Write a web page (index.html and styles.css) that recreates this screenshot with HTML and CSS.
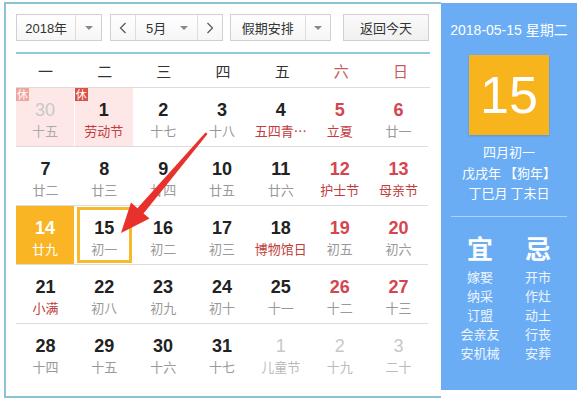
FILE: index.html
```html
<!DOCTYPE html>
<html lang="zh-CN">
<head>
<meta charset="utf-8">
<link rel="stylesheet" href="styles.css">
</head>
<body>
<div class="cal">
  <div class="main">
    <div class="toolbar">
      <div class="sel sel-year"><span class="sel-text">2018年</span><span class="sel-arrow"><i class="tri"></i></span></div>
      <div class="month-group">
        <span class="nav">
          <svg width="8" height="12" viewBox="0 0 8 12"><path d="M6.5 1 L1.5 6 L6.5 11" fill="none" stroke="#555" stroke-width="1.2"/></svg>
        </span>
        <span class="month"><span class="month-text">5月</span><i class="tri"></i></span>
        <span class="nav nav-next">
          <svg width="8" height="12" viewBox="0 0 8 12"><path d="M1.5 1 L6.5 6 L1.5 11" fill="none" stroke="#555" stroke-width="1.2"/></svg>
        </span>
      </div>
      <div class="sel sel-holiday"><span class="sel-text">假期安排</span><span class="sel-arrow"><i class="tri"></i></span></div>
      <div class="btn-today">返回今天</div>
    </div>
    <div class="weekdays">
      <span>一</span><span>二</span><span>三</span><span>四</span><span>五</span><span class="we">六</span><span class="we">日</span>
    </div>
    <div class="grid">
      <div class="row">
        <div class="cell rest other"><span class="badge light">休</span><b>30</b><small>十五</small></div>
        <div class="cell rest"><span class="badge">休</span><b>1</b><small class="fest">劳动节</small></div>
        <div class="cell"><b>2</b><small>十七</small></div>
        <div class="cell"><b>3</b><small>十八</small></div>
        <div class="cell"><b>4</b><small class="fest">五四青…</small></div>
        <div class="cell wkend"><b>5</b><small class="fest">立夏</small></div>
        <div class="cell wkend"><b>6</b><small>廿一</small></div>
      </div>
      <div class="row">
        <div class="cell"><b>7</b><small>廿二</small></div>
        <div class="cell"><b>8</b><small>廿三</small></div>
        <div class="cell"><b>9</b><small>廿四</small></div>
        <div class="cell"><b>10</b><small>廿五</small></div>
        <div class="cell"><b>11</b><small>廿六</small></div>
        <div class="cell wkend"><b>12</b><small class="fest">护士节</small></div>
        <div class="cell wkend"><b>13</b><small class="fest">母亲节</small></div>
      </div>
      <div class="row">
        <div class="cell selected"><b>14</b><small>廿九</small></div>
        <div class="cell today"><span class="frame"></span><b>15</b><small>初一</small></div>
        <div class="cell"><b>16</b><small>初二</small></div>
        <div class="cell"><b>17</b><small>初三</small></div>
        <div class="cell"><b>18</b><small class="fest">博物馆日</small></div>
        <div class="cell wkend"><b>19</b><small>初五</small></div>
        <div class="cell wkend"><b>20</b><small>初六</small></div>
      </div>
      <div class="row">
        <div class="cell"><b>21</b><small class="fest">小满</small></div>
        <div class="cell"><b>22</b><small>初八</small></div>
        <div class="cell"><b>23</b><small>初九</small></div>
        <div class="cell"><b>24</b><small>初十</small></div>
        <div class="cell"><b>25</b><small>十一</small></div>
        <div class="cell wkend"><b>26</b><small>十二</small></div>
        <div class="cell wkend"><b>27</b><small>十三</small></div>
      </div>
      <div class="row">
        <div class="cell"><b>28</b><small>十四</small></div>
        <div class="cell"><b>29</b><small>十五</small></div>
        <div class="cell"><b>30</b><small>十六</small></div>
        <div class="cell"><b>31</b><small>十七</small></div>
        <div class="cell other"><b>1</b><small>儿童节</small></div>
        <div class="cell other"><b>2</b><small>十九</small></div>
        <div class="cell other"><b>3</b><small>二十</small></div>
      </div>
    </div>
  </div>
  <div class="side">
    <div class="side-date">2018-05-15 星期二</div>
    <div class="side-day">15</div>
    <div class="side-lunar">
      <div>四月初一</div>
      <div>戊戌年 【狗年】</div>
      <div>丁巳月 丁未日</div>
    </div>
    <div class="side-sep"></div>
    <div class="yiji">
      <div class="col">
        <div class="big">宜</div>
        <div>嫁娶</div><div>纳采</div><div>订盟</div><div>会亲友</div><div>安机械</div>
      </div>
      <div class="col">
        <div class="big">忌</div>
        <div>开市</div><div>作灶</div><div>动土</div><div>行丧</div><div>安葬</div>
      </div>
    </div>
  </div>
  <svg class="arrow" width="582" height="400" viewBox="0 0 582 400">
    <polygon points="206.5,133 207.5,134 143.5,213.5 149.5,218.5 121,233 131,202.5 137.4,208.3 205.5,132.5" fill="#e8312c"/>
  </svg>
</div>
</body>
</html>
```
FILE: styles.css
```css
* { box-sizing: border-box; }
html, body { margin: 0; padding: 0; background: #fff; }
body {
  font-family: "Liberation Sans", "Noto Sans CJK SC", sans-serif;
  color: #333;
}
.cal {
  position: relative;
  display: flex;
  align-items: flex-start;
  width: 582px;
  height: 400px;
  padding: 2px 0 0 4px;
}
.main {
  width: 437px;
  height: 396px;
  border: 2px solid #8dc2d6;
  border-right: none;
  padding: 10px 11px 0 10px;
}
.toolbar {
  display: flex;
  align-items: center;
  height: 27px;
  font-size: 13px;
  color: #333;
}
.sel, .month-group, .btn-today {
  display: flex;
  height: 27px;
  border: 1px solid #d0d0d0;
  background: linear-gradient(#fff, #f6f6f6);
}
.sel-text {
  display: flex;
  align-items: center;
  justify-content: center;
  border-right: 1px solid #ddd;
}
.sel-arrow {
  width: 25px;
  display: flex;
  align-items: center;
  justify-content: center;
}
.tri {
  display: block;
  width: 0; height: 0;
  border-left: 4px solid transparent;
  border-right: 4px solid transparent;
  border-top: 4px solid #888;
}
.sel-year { width: 86px; }
.sel-year .sel-text { width: 60px; }
.month-group { margin-left: 8px; width: 113px; }
.nav {
  width: 25px;
  display: flex;
  align-items: center;
  justify-content: center;
  border-right: 1px solid #ddd;
}
.nav-next { border-right: none; border-left: 1px solid #ddd; }
.month {
  flex: 1;
  display: flex;
  align-items: center;
  padding: 0 9px 0 10px;
}
.month-text { flex: 1; }
.sel-holiday { margin-left: 7px; width: 101px; }
.sel-holiday .sel-text { width: 76px; }
.btn-today {
  margin-left: 12px;
  width: 86px;
  align-items: center;
  justify-content: center;
  background: linear-gradient(#fafafa, #f0f0f0);
}
.weekdays {
  margin-top: 11px;
  border-top: 2px solid #8fc8da;
  border-bottom: 1px solid #dcdcdc;
  height: 36px;
  display: grid;
  grid-template-columns: repeat(7, 1fr);
  align-items: center;
  text-align: center;
  font-size: 15px;
  color: #333;
  font-family: "Noto Sans CJK SC", sans-serif;
}
.weekdays .we { color: #c9585c; }
.grid { width: 412px; }
.row {
  display: grid;
  grid-template-columns: repeat(7, 1fr);
  height: 59px;
  border-bottom: 1px solid #dcdcdc;
}
.row:last-child { border-bottom: none; }
.cell {
  position: relative;
  display: flex;
  flex-direction: column;
  align-items: center;
  padding-top: 12px;
}
.cell b {
  font-size: 18px;
  line-height: 20px;
  font-weight: 700;
  color: #222;
}
.cell small {
  margin-top: 3px;
  font-size: 13px;
  line-height: 16px;
  color: #999;
  font-family: "Noto Sans CJK SC", sans-serif;
  white-space: nowrap;
}
.cell.wkend b { color: #d4464f; }
.cell small.fest { color: #c23c3c; }
.cell.rest { background: #fde8e7; margin-right: 1px; }
.cell.other b { color: #c8c8c8; font-weight: 400; }
.cell.other small { color: #bbb; }
.cell.rest.other small { color: #aaa; }
.badge {
  position: absolute;
  left: 0; top: 0;
  width: 13px; height: 13px;
  font-size: 11px;
  line-height: 13px;
  text-align: center;
  color: #fff;
  background: #dc5248;
  font-family: "Noto Sans CJK SC", sans-serif;
}
.badge.light { background: #f2a49c; }
.cell.selected { background: #f9b523; margin-right: 1px; }
.cell.selected b, .cell.selected small { color: #fff; }
.frame {
  position: absolute;
  left: 2px; top: 1px; right: 2px; bottom: 1px;
  border: 3px solid #f9b92c;
}
.side {
  width: 136px;
  height: 387px;
  margin-top: 1px;
  background: #6aadf4;
  color: #fff;
  display: flex;
  flex-direction: column;
  align-items: center;
  font-family: "Liberation Sans", "Noto Sans CJK SC", sans-serif;
}
.side-date {
  margin-top: 19px;
  font-size: 14px;
  line-height: 16px;
}
.side-day {
  margin-top: 17px;
  width: 80px;
  height: 80px;
  background: #f8b41d;
  box-shadow: 0 1px 2px rgba(0,0,0,0.15);
  display: flex;
  align-items: center;
  justify-content: center;
  font-size: 52px;
  line-height: 1;
}
.side-lunar {
  margin-top: 7px;
  font-size: 13px;
  line-height: 20.5px;
  text-align: center;
  font-family: "Noto Sans CJK SC", sans-serif;
}
.side-sep {
  margin-top: 12px;
  width: 116px;
  height: 1px;
  background: rgba(255,255,255,0.45);
}
.yiji {
  display: flex;
  margin-top: 15px;
  font-family: "Noto Sans CJK SC", sans-serif;
  font-size: 13px;
  line-height: 19px;
  color: #eef5ff;
}
.col {
  width: 58px;
  text-align: center;
}
.big {
  font-size: 26px;
  line-height: 32px;
  font-weight: 700;
  color: #fff;
  margin-bottom: 3px;
}
.arrow {
  position: absolute;
  left: 0; top: 0;
  pointer-events: none;
}
```
